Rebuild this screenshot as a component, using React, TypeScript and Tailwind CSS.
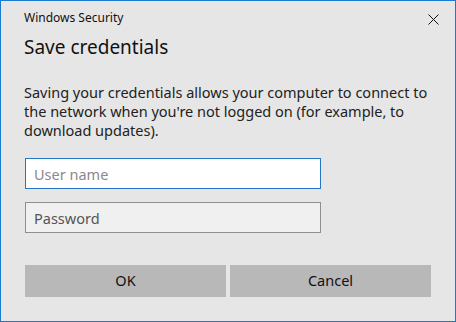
export default function App() {
  return (
    <div
      className="w-[456px] h-[322px] bg-[#e6e6e6] border border-[#1a7bd0] flex flex-col text-black"
      style={{ fontFamily: '"Noto Sans", "Open Sans", sans-serif' }}
    >
      <div className="flex items-center justify-between pl-[23px] pr-[16px] pt-[8px] h-[26px]">
        <span className="text-[12px] text-[#111]">Windows Security</span>
        <svg width="11" height="11" viewBox="0 0 11 11" className="mt-[2px]">
          <path d="M0.5 0.5 L10.5 10.5 M10.5 0.5 L0.5 10.5" stroke="#111" strokeWidth="1" />
        </svg>
      </div>

      <h1 className="pl-[23px] mt-[7px] text-[19px] leading-[26px] text-[#111]">Save credentials</h1>

      <p className="pl-[23px] pr-[16px] mt-[23px] text-[14.5px] leading-[19px] text-[#222]">
        Saving your credentials allows your computer to connect to the network when you're not logged on (for example, to
        download updates).
      </p>

      <div className="pl-[24px] mt-[18px] flex flex-col gap-[13px]">
        <input
          placeholder="User name"
          className="w-[296px] h-[31px] bg-white border border-[#2576c5] px-[8px] text-[14.5px] outline-none placeholder:text-[#8a8a8a]"
        />
        <input
          placeholder="Password"
          className="w-[296px] h-[31px] bg-[#f0f0f0] border border-[#8f8f8f] px-[8px] text-[14.5px] outline-none placeholder:text-[#555]"
        />
      </div>

      <div className="pl-[24px] mt-[32px] flex gap-[4px]">
        <button className="w-[201px] h-[32px] bg-[#b8b8b8] text-[14.5px] text-[#111]">OK</button>
        <button className="w-[201px] h-[32px] bg-[#b8b8b8] text-[14.5px] text-[#111]">Cancel</button>
      </div>
    </div>
  );
}
